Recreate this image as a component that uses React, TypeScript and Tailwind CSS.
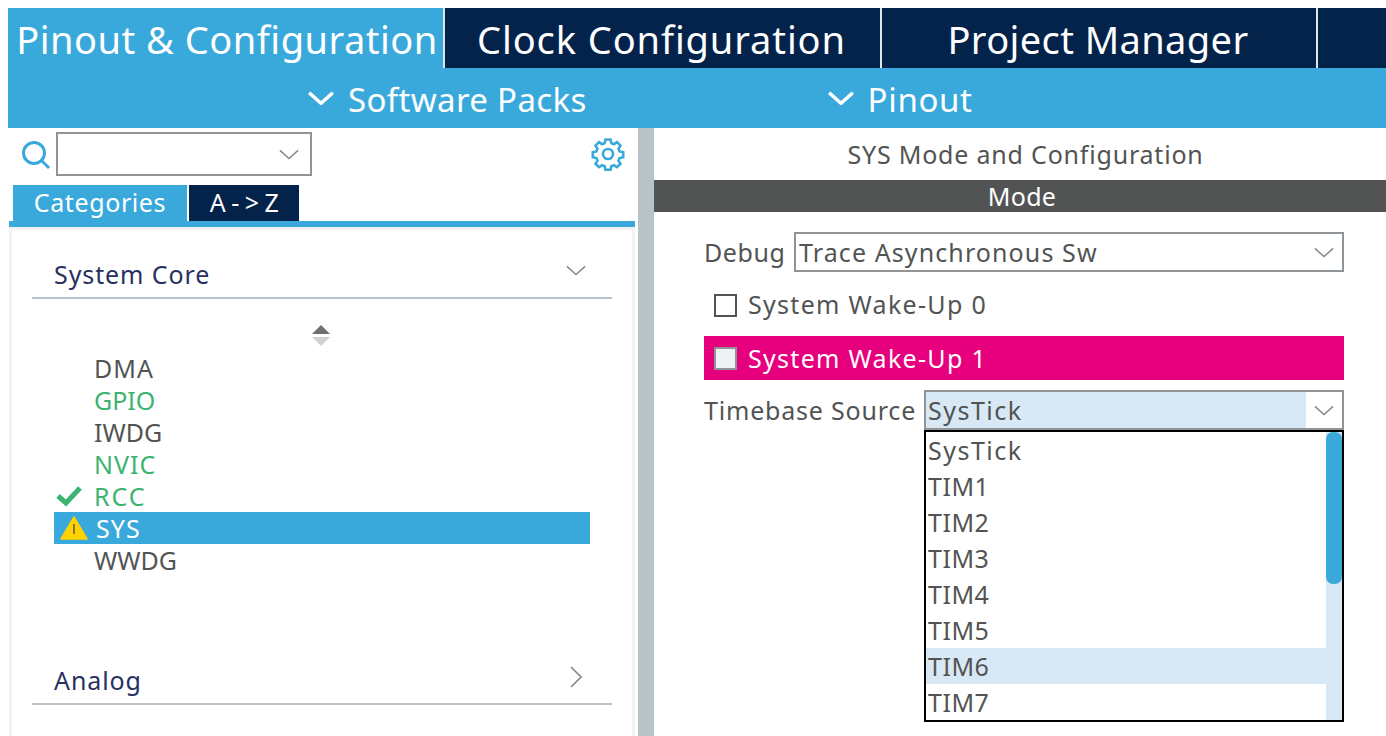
import React from "react";

const F = { fontFamily: '"Noto Sans", "Open Sans", sans-serif' };

function Chevron({ className = "", color = "#85888b", w = 22, h = 12, sw = 1.6 }: { className?: string; color?: string; w?: number; h?: number; sw?: number }) {
  return (
    <svg className={className} width={w} height={h} viewBox="0 0 22 12" fill="none" preserveAspectRatio="none">
      <path d="M1 1.5 L11 10.5 L21 1.5" stroke={color} strokeWidth={sw} />
    </svg>
  );
}

function Gear() {
  return (
    <svg width="34" height="34" viewBox="0 0 34 34" fill="none" stroke="#39a9dc" strokeWidth="2.6">
      <circle cx="17" cy="17" r="5" strokeWidth="2.6" />
      <path d="M14.5 2.5h5l.8 3.6 2.6 1.1 3.1-2 3.5 3.5-2 3.1 1.1 2.6 3.6.8v5l-3.6.8-1.1 2.6 2 3.1-3.5 3.5-3.1-2-2.6 1.1-.8 3.6h-5l-.8-3.6-2.6-1.1-3.1 2-3.5-3.5 2-3.1-1.1-2.6-3.6-.8v-5l3.6-.8 1.1-2.6-2-3.1 3.5-3.5 3.1 2 2.6-1.1z" />
    </svg>
  );
}

function TopTab({ label, active, className }: { label: string; active?: boolean; className: string }) {
  return (
    <div className={`h-[60px] flex items-center justify-center pt-[3px] text-white text-[38px] whitespace-nowrap ${active ? "bg-[#39a9dc]" : "bg-[#03234b]"} ${className}`}>
      {label}
    </div>
  );
}

function SubMenu({ label, className }: { label: string; className: string }) {
  return (
    <div className={`flex items-center gap-[14px] text-white text-[33px] ${className}`}>
      <Chevron color="#ffffff" w={26} h={14} sw={3} />
      <span className="pt-[3px]">{label}</span>
    </div>
  );
}

function ListRow({ label, color, icon, selected, track }: { label: string; color: string; icon?: React.ReactNode; selected?: boolean; track: string }) {
  return (
    <div className={`h-8 w-[536px] ml-[22px] flex items-center text-[25px] ${color} ${selected ? "bg-[#39a9dc]" : ""}`}>
      <div className="w-10 flex justify-center items-center shrink-0">{icon}</div>
      <span className={`pt-[1px] ${track}`}>{label}</span>
    </div>
  );
}

const items = [
  { t: "SysTick", c: "tracking-[1.5px]" },
  { t: "TIM1", c: "tracking-[0.5px]" },
  { t: "TIM2", c: "tracking-[0.5px]" },
  { t: "TIM3", c: "tracking-[0.5px]" },
  { t: "TIM4", c: "tracking-[0.5px]" },
  { t: "TIM5", c: "tracking-[0.5px]" },
  { t: "TIM6", c: "tracking-[0.5px]" },
  { t: "TIM7", c: "tracking-[0.5px]" },
];

export default function App() {
  return (
    <div className="w-[1386px] h-[736px] overflow-hidden bg-white pt-2 pl-2 text-[#525454]" style={F}>
      {/* header */}
      <div className="flex h-[60px] bg-[#03234b]">
        <TopTab label="Pinout & Configuration" active className="w-[435px] pl-[3px] tracking-[0.5px]" />
        <div className="w-[2px] bg-[#dfe5ea]" />
        <TopTab label="Clock Configuration" className="w-[435px] pr-[2px] tracking-[0.9px]" />
        <div className="w-[2px] bg-[#dfe5ea]" />
        <TopTab label="Project Manager" className="w-[434px] pr-[2px] tracking-[0.4px]" />
        <div className="w-[2px] bg-[#dfe5ea]" />
      </div>
      <div className="flex h-[60px] bg-[#39a9dc]">
        <SubMenu label="Software Packs" className="ml-[300px] tracking-[0.35px]" />
        <SubMenu label="Pinout" className="ml-[241px] tracking-[0.65px]" />
      </div>

      <div className="flex h-[608px]">
        {/* left panel */}
        <div className="w-[630px] shrink-0">
          <div className="flex items-center h-[52px] pl-[13px]">
            <svg width="30" height="30" viewBox="0 0 30 30" fill="none" stroke="#39a9dc" className="mr-[5px] mt-[1px]">
              <circle cx="13" cy="13" r="10.5" strokeWidth="3" />
              <path d="M20 20l8 8" strokeWidth="3" />
            </svg>
            <div className="w-64 h-11 border-2 border-[#8f9499] flex items-center justify-end pr-[11px]">
              <Chevron w={20} h={11} />
            </div>
            <div className="ml-auto mr-[13px]"><Gear /></div>
          </div>
          <div className="flex h-9 mt-[5px] ml-[5px] gap-[2px] text-[25px] text-white">
            <div className="w-[174px] bg-[#39a9dc] flex items-center justify-center tracking-[0.6px]">Categories</div>
            <div className="w-[110px] bg-[#03234b] flex items-center justify-center pl-[6px] tracking-[5.5px]">A-&gt;Z</div>
          </div>
          <div className="ml-px w-[626px] h-[6px] bg-[#39a9dc]" />
          <div className="ml-px w-[626px] h-[509px] border-x-[3px] border-t-[3px] border-[#f1f2f3]">
            <div className="mx-5 h-[69px] border-b-2 border-[#b7c2c9] flex items-end justify-between pb-[4px] pl-[22px] pr-[26px]">
              <span className="text-[25px] text-[#28305f] tracking-[0.9px]">System Core</span>
              <Chevron className="mb-[17px]" w={20} h={11} />
            </div>
            <div className="h-[53px] flex flex-col items-center justify-start pt-[26px] ml-[-2px]">
              <div className="w-0 h-0 border-x-[9px] border-x-transparent border-b-[9px] border-b-[#6d6f71]" />
              <div className="w-0 h-0 mt-[3px] border-x-[9px] border-x-transparent border-t-[9px] border-t-[#cfd1d2]" />
            </div>
            <div className="ml-5">
              <ListRow label="DMA" color="text-[#525454]" track="tracking-[1px]" />
              <ListRow label="GPIO" color="text-[#3cb371]" track="" />
              <ListRow label="IWDG" color="text-[#525454]" track="" />
              <ListRow label="NVIC" color="text-[#3cb371]" track="tracking-[1px]" />
              <ListRow
                label="RCC"
                color="text-[#3cb371]"
                track="tracking-[2px]"
                icon={
                  <svg className="mr-[11px]" width="26" height="22" viewBox="0 0 26 22" fill="none">
                    <path d="M2 11l8 7L24 3" stroke="#3cb371" strokeWidth="5" />
                  </svg>
                }
              />
              <ListRow
                label="SYS"
                color="text-white"
                selected
                track="tracking-[1px] pl-[2px]"
                icon={
                  <svg width="28" height="24" viewBox="0 0 28 24">
                    <path d="M14 1 L27 23 H1 Z" fill="#ffd200" stroke="#ffd200" strokeLinejoin="round" strokeWidth="1.5" />
                    <rect x="13" y="8" width="2" height="10" fill="#8a7a20" />
                  </svg>
                }
              />
              <ListRow label="WWDG" color="text-[#525454]" track="" />
            </div>
            <div className="mx-5 mt-[49px] h-[80px] border-b-2 border-[#b7c2c9] flex items-end justify-between pb-[4px] pl-[22px] pr-[30px]">
              <span className="text-[25px] text-[#28305f] tracking-[0.9px]">Analog</span>
              <svg className="mb-[11px]" width="12" height="22" viewBox="0 0 12 22" fill="none">
                <path d="M1 1l10 10L1 21" stroke="#85888b" strokeWidth="1.6" />
              </svg>
            </div>
          </div>
        </div>
        {/* divider */}
        <div className="w-4 bg-[#b7c2c9] shrink-0" />
        {/* right panel */}
        <div className="flex-1">
          <div className="h-[52px] flex items-center justify-center text-[25px] pl-[11px] pt-[2px] tracking-[0.8px]">SYS Mode and Configuration</div>
          <div className="h-8 bg-[#525454] text-white text-[25px] flex items-center justify-center pl-[4px] pt-[2px] tracking-[0.3px]">Mode</div>
          <div className="pl-[50px] w-[690px]">
            <div className="flex items-center h-10 mt-5 text-[25px]">
              <span className="w-[90px] tracking-[0.6px] pt-[2px]">Debug</span>
              <div className="flex-1 h-10 border-2 border-[#8f9499] flex items-center justify-between pl-[3px] pr-[8px]">
                <span className="tracking-[1.1px] pt-[2px]">Trace Asynchronous Sw</span>
                <Chevron w={20} h={11} />
              </div>
            </div>
            <div className="flex items-center h-[44px] mt-[11px] pl-[10px] gap-[11px] text-[25px] mb-[9px]">
              <div className="w-[23px] h-[23px] border-2 border-[#525454] bg-white" />
              <span className="tracking-[1.3px]">System Wake-Up 0</span>
            </div>
            <div className="flex items-center h-[44px] pl-[10px] gap-[11px] text-[25px] bg-[#e6007e] text-white">
              <div className="w-[23px] h-[23px] border-2 border-[#8f9499] bg-[#eff2f5]" />
              <span className="tracking-[1.3px] pt-[2px]">System Wake-Up 1</span>
            </div>
            <div className="flex items-center h-10 mt-[10px] text-[25px]">
              <span className="w-[220px] whitespace-nowrap tracking-[0.8px] pt-[2px]">Timebase Source</span>
              <div className="flex-1 h-10 border-2 border-[#8f9499] flex items-center">
                <span className="flex-1 h-full bg-[#d8e8f5] pl-[2px] pt-[2px] flex items-center tracking-[1.5px]">SysTick</span>
                <div className="w-9 flex justify-center"><Chevron w={20} h={11} /></div>
              </div>
            </div>
            <div className="ml-[220px] h-[292px] border-2 border-black flex overflow-hidden">
              <div className="flex-1">
                {items.map(({ t, c }) => (
                  <div key={t} className={`h-9 flex items-center pl-[2px] pt-[2px] text-[25px] ${c} ${t === "TIM6" ? "bg-[#d8e8f5]" : ""}`}>{t}</div>
                ))}
              </div>
              <div className="w-4 bg-[#d8e8f5]">
                <div className="h-[152px] bg-[#39a9dc] rounded-[7px]" />
              </div>
            </div>
          </div>
        </div>
      </div>
    </div>
  );
}
